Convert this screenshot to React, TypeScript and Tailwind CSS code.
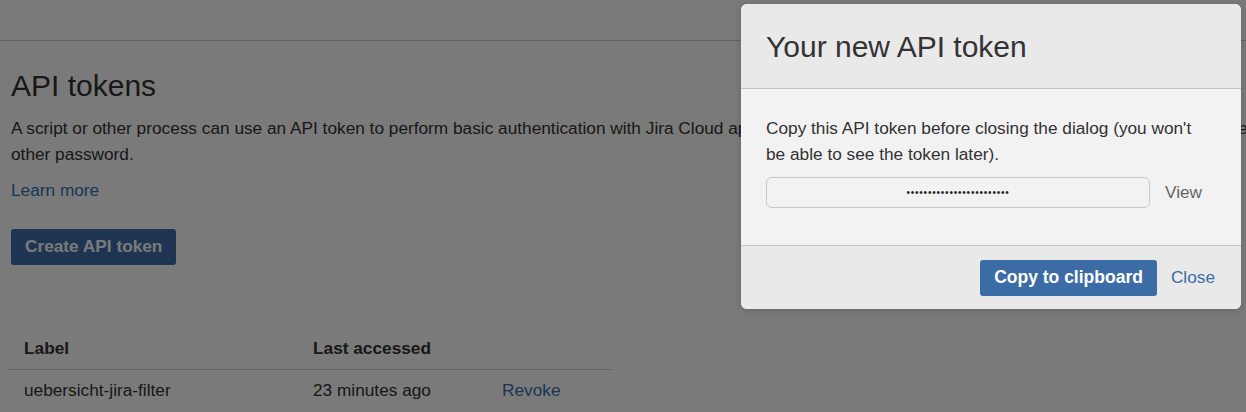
import * as React from 'react'

const FONT = "font-['Liberation_Sans',Arial,sans-serif]"

const TokenTable: React.FC = () => (
  <div className="mt-[64px] w-[603px] ml-[8px]">
    <div className="flex h-[41px] items-center border-b border-[#cccccc] text-[17.25px] font-bold text-[#333333]">
      <div className="w-[305px] pl-[16px]">Label</div>
      <div className="w-[189px]">Last accessed</div>
      <div />
    </div>
    <div className="flex h-[41px] items-center text-[17.25px] text-[#333333]">
      <div className="w-[305px] pl-[16px]">uebersicht-jira-filter</div>
      <div className="w-[189px]">23 minutes ago</div>
      <a className="text-[#3572b0]">Revoke</a>
    </div>
  </div>
)

const TokenDialog: React.FC = () => (
  <div className="absolute left-[741px] top-[4px] w-[500px] overflow-hidden rounded-[6px] bg-[#f2f2f2] shadow-[0_2px_8px_rgba(0,0,0,0.15)]">
    <div className="flex h-[85px] items-center border-b border-[#c4c4c4] bg-[#e9e9e9] px-[25px]">
      <h2 className="text-[30px] font-normal text-[#333333]">Your new API token</h2>
    </div>
    <div className="px-[25px] pt-[26px] pb-[37px]">
      <p className="w-[440px] text-[17.25px] leading-[26px] text-[#333333]">
        Copy this API token before closing the dialog (you won't be able to see the token later).
      </p>
      <div className="mt-[10px] flex items-center gap-[15px]">
        <div className="flex h-[31px] w-[384px] items-center justify-center rounded-[6px] border border-[#c8c8c8] bg-[#f2f2f2]">
          <span className="text-[10px] tracking-[0.8px] text-[#222222]">••••••••••••••••••••••••</span>
        </div>
        <a className="text-[17.25px] text-[#666666]">View</a>
      </div>
    </div>
    <div className="flex h-[64px] items-center justify-end gap-[14px] border-t border-[#c4c4c4] bg-[#e9e9e9] pr-[26px]">
      <button className="h-[36px] rounded-[3px] bg-[#3b6ca5] px-[14px] text-[17.5px] font-bold text-white">
        Copy to clipboard
      </button>
      <a className="text-[17.25px] text-[#3b6ca5]">Close</a>
    </div>
  </div>
)

export default function App() {
  return (
    <div className={`relative h-[412px] w-[1246px] overflow-hidden bg-white ${FONT}`}>
      <div className="h-[41px] border-b border-[#cccccc]" />
      <div className="pl-[11px]">
        <h1 className="mt-[27px] text-[30px] leading-[36px] font-normal text-[#333333]">API tokens</h1>
        <p className="mt-[11px] whitespace-nowrap text-[17.25px] leading-[26px] text-[#333333]">
          A script or other process can use an API token to perform basic authentication with Jira Cloud applications or Confluence Cloud. You should treat API tokens as securely as any
          <br />
          other password.
        </p>
        <a className="mt-[10px] block text-[17.25px] leading-[26px] text-[#3572b0]">Learn more</a>
        <button className="mt-[26px] h-[36px] rounded-[3px] bg-[#416eab] px-[14px] text-[17.25px] font-bold text-white">
          Create API token
        </button>
      </div>
      <TokenTable />
      <div className="absolute inset-0 bg-black/[0.52]" />
      <TokenDialog />
    </div>
  )
}
